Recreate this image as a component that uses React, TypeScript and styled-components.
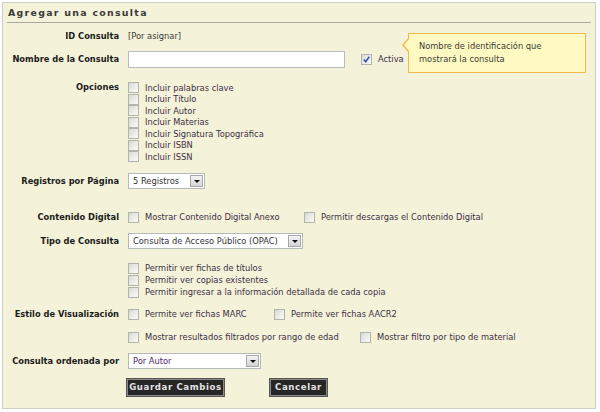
import React from "react";
import styled, { createGlobalStyle } from "styled-components";

const Global = createGlobalStyle`
  html, body { margin: 0; padding: 0; background: #ffffff; }
  body { font-family: "DejaVu Sans", Verdana, sans-serif; font-size: 8.3px; color: #333; }
  * { box-sizing: border-box; }
`;

const Panel = styled.div`
  position: relative;
  margin: 2px 0 0 2px;
  width: 594px;
  height: 407px;
  border: 1px solid #cfcfc4;
  background: #f4f2d8;
  padding: 0 4px;
`;

const Header = styled.div`
  height: 20px;
  border-bottom: 1px solid #a8a8a0;
  padding-left: 1px;
  display: flex;
  align-items: center;
  font-weight: bold;
  font-size: 9.4px;
  letter-spacing: 1.3px;
  color: #3a3a3a;
`;

const Row = styled.div<{ $h: number; $mt: number; $top?: boolean }>`
  display: grid;
  grid-template-columns: 112px 1fr;
  column-gap: 9px;
  align-items: ${(p) => (p.$top ? "start" : "center")};
  height: ${(p) => p.$h}px;
  margin-top: ${(p) => p.$mt}px;
`;

const Label = styled.div`
  text-align: right;
  font-weight: bold;
  color: #1c1c1c;
  white-space: nowrap;
`;

const Value = styled.div`
  color: #3a3a3a;
`;

const Field = styled.div`
  display: flex;
  align-items: center;
`;

const Stack = styled.div<{ $step: number }>`
  display: grid;
  grid-auto-rows: ${(p) => p.$step}px;
`;

const Check = styled.label<{ $w?: number }>`
  display: flex;
  align-items: center;
  gap: 6px;
  color: #3c3046;
  white-space: nowrap;
  width: ${(p) => (p.$w ? `${p.$w}px` : "auto")};
`;

const Box = styled.span`
  position: relative;
  width: 11px;
  height: 11px;
  flex: none;
  border: 1px solid #b4b4ae;
  background: linear-gradient(135deg, #d8d8d4 0%, #eeeeea 60%, #fafaf8 100%);
`;

const Tick = styled.svg`
  position: absolute;
  left: 0px;
  top: 0px;
`;

const TextInput = styled.div`
  width: 217px;
  height: 17px;
  border: 1px solid #b5bcc2;
  background: #fff;
`;

const Select = styled.div<{ $w: number; $accent?: boolean }>`
  width: ${(p) => p.$w}px;
  height: 16px;
  border: 1px solid #b5b8bc;
  background: #fff;
  display: flex;
  align-items: center;
  justify-content: space-between;
  padding: 0 1px 0 4px;
  white-space: nowrap;
  color: ${(p) => (p.$accent ? "#4a2a66" : "#333")};
`;

const Arrow = styled.span`
  width: 13px;
  height: 12px;
  flex: none;
  border: 1px solid #a8a8a8;
  background: linear-gradient(#f4f4f4, #d4d4d4);
  display: flex;
  align-items: center;
  justify-content: center;
  &::after {
    content: "";
    border-left: 3px solid transparent;
    border-right: 3px solid transparent;
    border-top: 3px solid #111;
  }
`;

const Buttons = styled.div`
  display: flex;
  gap: 46px;
  margin-top: 10px;
  padding-left: 120px;
`;

const Button = styled.button<{ $w: number }>`
  width: ${(p) => p.$w}px;
  height: 17px;
  padding: 0;
  background: #262626;
  border: 1px solid #8a8a86;
  outline: 1px solid #555;
  color: #e2e2e2;
  font-family: "DejaVu Sans", Verdana, sans-serif;
  font-weight: bold;
  font-size: 8.6px;
  letter-spacing: 0.6px;
  line-height: 1;
`;

const Tooltip = styled.div`
  position: absolute;
  left: 405px;
  top: 30px;
  width: 178px;
  height: 40px;
  background: #fffac2;
  border: 1px solid #f1b64c;
  padding: 6px 0 0 10px;
  color: #3a3a3a;
  line-height: 13px;
  &::before {
    content: "";
    position: absolute;
    left: -7px;
    top: 3px;
    border-top: 8px solid transparent;
    border-bottom: 8px solid transparent;
    border-right: 7px solid #f1b64c;
  }
  &::after {
    content: "";
    position: absolute;
    left: -5px;
    top: 4px;
    border-top: 7px solid transparent;
    border-bottom: 7px solid transparent;
    border-right: 6px solid #fffac2;
  }
`;

const Inline = styled.div<{ $gap: number }>`
  display: flex;
  align-items: center;
  gap: ${(p) => p.$gap}px;
`;

const CB = ({ label, checked, w }: { label: string; checked?: boolean; w?: number }) => (
  <Check $w={w}>
    <Box>
      {checked && (
        <Tick width="9" height="9" viewBox="0 0 9 9">
          <path d="M1.8 4.6 L3.7 6.8 L7.3 1.8" stroke="#3a4fb0" strokeWidth="1.5" fill="none" />
        </Tick>
      )}
    </Box>
    {label}
  </Check>
);

const opciones = [
  "Incluir palabras clave",
  "Incluir Título",
  "Incluir Autor",
  "Incluir Materias",
  "Incluir Signatura Topográfica",
  "Incluir ISBN",
  "Incluir ISSN",
];

const permisos = [
  "Permitir ver fichas de títulos",
  "Permitir ver copias existentes",
  "Permitir ingresar a la información detallada de cada copia",
];

export default function App() {
  return (
    <>
      <Global />
      <Panel>
        <Header>Agregar una consulta</Header>
        <Row $h={16} $mt={5}>
          <Label>ID Consulta</Label>
          <Value>[Por asignar]</Value>
        </Row>
        <Row $h={18} $mt={6}>
          <Label>Nombre de la Consulta</Label>
          <Inline $gap={16}>
            <TextInput />
            <CB label="Activa" checked />
          </Inline>
        </Row>
        <Row $h={81} $mt={14} $top>
          <Label>Opciones</Label>
          <Stack $step={11.5}>
            {opciones.map((o) => (
              <CB key={o} label={o} />
            ))}
          </Stack>
        </Row>
        <Row $h={16} $mt={10}>
          <Label>Registros por Página</Label>
          <Field>
            <Select $w={77}>
              5 Registros
              <Arrow />
            </Select>
          </Field>
        </Row>
        <Row $h={14} $mt={21}>
          <Label>Contenido Digital</Label>
          <Inline $gap={0}>
            <CB label="Mostrar Contenido Digital Anexo" w={176} />
            <CB label="Permitir descargas el Contenido Digital" />
          </Inline>
        </Row>
        <Row $h={16} $mt={9}>
          <Label>Tipo de Consulta</Label>
          <Field>
            <Select $w={175}>
              Consulta de Acceso Público (OPAC)
              <Arrow />
            </Select>
          </Field>
        </Row>
        <Row $h={36} $mt={13} $top>
          <Label />
          <Stack $step={12}>
            {permisos.map((o) => (
              <CB key={o} label={o} />
            ))}
          </Stack>
        </Row>
        <Row $h={14} $mt={9}>
          <Label>Estilo de Visualización</Label>
          <Inline $gap={0}>
            <CB label="Permite ver fichas MARC" w={146} />
            <CB label="Permite ver fichas AACR2" />
          </Inline>
        </Row>
        <Row $h={14} $mt={9}>
          <Label />
          <Inline $gap={0}>
            <CB label="Mostrar resultados filtrados por rango de edad" w={232} />
            <CB label="Mostrar filtro por tipo de material" />
          </Inline>
        </Row>
        <Row $h={16} $mt={9}>
          <Label>Consulta ordenada por</Label>
          <Field>
            <Select $w={133} $accent>
              Por Autor
              <Arrow />
            </Select>
          </Field>
        </Row>
        <Buttons>
          <Button $w={97}>Guardar Cambios</Button>
          <Button $w={57}>Cancelar</Button>
        </Buttons>
        <Tooltip>
          Nombre de identificación que
          <br />
          mostrará la consulta
        </Tooltip>
      </Panel>
    </>
  );
}
